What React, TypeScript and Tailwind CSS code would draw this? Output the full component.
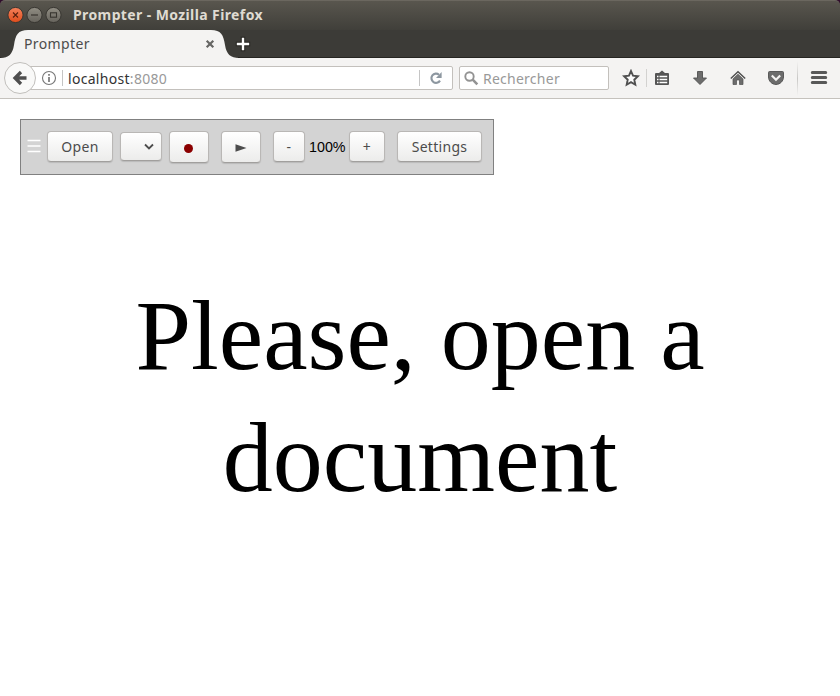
import React from "react";

const ubuntu = "font-['Noto_Sans','Open_Sans',sans-serif]";
const buttonBase =
  "flex shrink-0 items-center justify-center rounded-[4px] border border-[#b9b7b5] border-b-[#a19f9d] bg-linear-to-b from-white to-[#ececeb] text-[14px] leading-[18px] tracking-[0.3px] text-[#4c4c4c] shadow-[0_1px_1px_rgba(0,0,0,0.12)]";

function TitleBar() {
  return (
    <header className="flex h-[30px] items-center rounded-t-[5px] border-t border-[#6b675f] bg-linear-to-b from-[#59564e] to-[#403f3a] pl-[7px]">
      <svg width="56" height="18" viewBox="0 0 56 18" className="mr-[10px] mb-px shrink-0">
        <defs>
          <linearGradient id="closeFill" x1="0" y1="0" x2="0" y2="1">
            <stop offset="0" stopColor="#f5815b" />
            <stop offset="1" stopColor="#df4c1b" />
          </linearGradient>
          <linearGradient id="grayFill" x1="0" y1="0" x2="0" y2="1">
            <stop offset="0" stopColor="#918e84" />
            <stop offset="1" stopColor="#66635c" />
          </linearGradient>
        </defs>
        <circle cx="8.5" cy="9" r="7.6" fill="url(#closeFill)" stroke="#383631" />
        <circle cx="27.5" cy="9" r="7.6" fill="url(#grayFill)" stroke="#383631" />
        <circle cx="46.5" cy="9" r="7.6" fill="url(#grayFill)" stroke="#383631" />
        <path d="M6 6.5l5 5M11 6.5l-5 5" stroke="#58200e" strokeWidth="1.1" />
        <path d="M24 9h7" stroke="#37352f" strokeWidth="1.2" />
        <rect x="43.5" y="6.8" width="6" height="4.4" fill="none" stroke="#37352f" strokeWidth="1.1" />
      </svg>
      <h1 className="mb-[2px] text-[14px] leading-[18px] font-bold tracking-[0.39px] whitespace-nowrap text-[#dfdbd2]">
        Prompter - Mozilla Firefox
      </h1>
    </header>
  );
}

function TabStrip() {
  return (
    <div className="relative flex h-[28px] items-center bg-[#3c3b37]">
      <svg width="240" height="28" viewBox="0 0 240 28" className="absolute top-0 left-0">
        <path d="M0 27.5H840" stroke="#262521" />
        <path
          d="M0 28C9 28 12.500 24 14 15C15.500 5 18 0 28 0H211C221 0 223.500 5 225 15C226.500 24 230 28 240 28Z"
          fill="#f4f3f2"
        />
      </svg>
      <div className="absolute bottom-0 left-[238px] h-px w-[602px] bg-[#262521]" />
      <span className="relative ml-6 w-[181px] text-[14px] leading-[18px] tracking-[0.38px] text-[#4c4c4c]">Prompter</span>
      <svg width="10" height="10" viewBox="0 0 10 10" className="relative shrink-0">
        <path d="M1.700 1.700l6.600 6.600M8.300 1.700l-6.600 6.600" stroke="#666664" strokeWidth="2.200" />
      </svg>
      <svg width="16" height="16" viewBox="0 0 16 16" className="relative ml-5 shrink-0">
        <path d="M8 .8v14.400M.8 8h14.400" stroke="#24231f" strokeWidth="4.400" />
        <path d="M8 1.800v12.400M1.800 8h12.400" stroke="#fff" strokeWidth="2.400" />
      </svg>
    </div>
  );
}

function NavBar() {
  return (
    <nav className="flex h-[41px] items-center border-b border-[#c5c2bd] bg-[#f4f3f2] pl-1">
      <div className="z-10 flex size-8 shrink-0 items-center justify-center rounded-full border border-[#c1bfbc] bg-[#f9f9f8]">
        <svg width="16" height="16" viewBox="0 0 16 16">
          <path d="M9 2L3 8l6 6M3 8h11.500" fill="none" stroke="#4f4f4f" strokeWidth="3.300" />
        </svg>
      </div>
      <div className="-ml-4 flex h-[24px] w-[433px] shrink-0 items-center rounded-r-[2px] border border-[#c3c0bc] bg-white pl-[20px]">
        <svg width="16" height="16" viewBox="0 0 16 16" className="shrink-0">
          <circle cx="8" cy="8" r="6.500" fill="none" stroke="#777" strokeWidth="1.100" />
          <path d="M8 7v5M8 4v1.700" stroke="#777" strokeWidth="1.700" />
        </svg>
        <span className="ml-[5px] h-4 w-px bg-[#c5c5c5]" />
        <span className="mt-px ml-[5px] text-[14px] leading-[18px] tracking-[0.3px] text-[#333]">
          localhost<span className="text-[#999]">:8080</span>
        </span>
        <span className="ml-auto h-4 w-px bg-[#c5c5c5]" />
        <svg width="14" height="14" viewBox="0 0 14 14" className="mr-[9px] ml-[9px] shrink-0">
          <path d="M11 9.600A4.600 4.600 0 1 1 10 3.700" fill="none" stroke="#8d97a0" strokeWidth="2.100" />
          <path d="M12.600 1v6H7z" fill="#8d97a0" />
        </svg>
      </div>
      <div className="ml-[6px] flex h-[24px] w-[150px] shrink-0 items-center rounded-[2px] border border-[#c3c0bc] bg-white pl-1">
        <svg width="15" height="15" viewBox="0 0 15 15">
          <circle cx="5.500" cy="5.500" r="4.200" fill="none" stroke="#939393" strokeWidth="1.900" />
          <path d="M8.700 8.700l4.600 4.600" stroke="#939393" strokeWidth="2.600" />
        </svg>
        <span className="mt-px ml-1 text-[14px] leading-[18px] tracking-[0.25px] text-[#999]">Rechercher</span>
      </div>
      <svg width="18" height="18" viewBox="0 0 18 18" className="ml-[13px] shrink-0">
        <path d="M9 2l2 4.700 5 .500-3.700 3.500 1 5L9 13.200l-4.300 2.500 1-5L2 7.200l5-.500z" fill="#fbfbfb" stroke="#505050" strokeWidth="1.900" />
      </svg>
      <span className="ml-[6px] h-[18px] w-px bg-[#d3d2d0]" />
      <svg width="16" height="16" viewBox="0 0 16 16" className="ml-[7px] shrink-0">
        <path d="M2 3H5L8 .5 11 3H14Q15 3 15 4v10Q15 15 14 15H2Q1 15 1 14V4Q1 3 2 3z" fill="#555" />
        <path d="M3 6.500h1.500M5.500 6.500h7.700M3 9.500h1.500M5.500 9.500h7.700M3 12.500h1.500M5.500 12.500h7.700" stroke="#fff" strokeWidth="1.700" />
      </svg>
      <svg width="16" height="16" viewBox="0 0 16 16" className="ml-[22px] shrink-0">
        <path d="M5.500 1.500h5V8h4L8 14.500 1.500 8h4z" fill="#6c6c6c" stroke="#505050" strokeWidth=".9" />
      </svg>
      <svg width="16" height="16" viewBox="0 0 16 16" className="ml-[22px] shrink-0">
        <path d="M.8 8.500L8 1.800l7.200 6.700" fill="none" stroke="#505050" strokeWidth="1.500" />
        <path d="M8 4.200l5 4.700v5.600H9.500V10h-3v4.500H3V8.900z" fill="#6c6c6c" stroke="#505050" strokeWidth=".7" />
      </svg>
      <svg width="18" height="16" viewBox="0 0 18 16" className="ml-[21px] shrink-0">
        <path d="M2.500 1.500h13q1 0 1 1V7c0 4-3.500 7.500-7.500 7.500S1.500 11 1.500 7V2.500q0-1 1-1z" fill="#6c6c6c" stroke="#505050" strokeWidth=".9" />
        <path d="M4.800 5.500l4.200 4.200 4.200-4.200" fill="none" stroke="#f4f3f2" strokeWidth="2.200" />
      </svg>
      <span className="ml-[12px] h-[35px] w-px bg-linear-to-b from-transparent via-[#c9c8c6] to-transparent" />
      <svg width="18" height="16" viewBox="0 0 18 16" className="ml-[12px] shrink-0">
        <path d="M2.300 2.500h13.400M2.300 7.500h13.400M2.300 12.500h13.400" stroke="#585858" strokeWidth="3" strokeLinecap="round" />
      </svg>
    </nav>
  );
}

function PrompterToolbar() {
  return (
    <div className="flex h-[56px] w-[474px] items-start border border-[#808080] bg-[#d3d3d3] pt-[11px] pl-[6px]">
      <svg width="14" height="14" viewBox="0 0 14 14" className="mt-2 shrink-0">
        <path d="M.5 1.500h13M.5 7h13M.5 12.500h13" stroke="#fff" strokeWidth="1.700" />
      </svg>
      <button className={`${buttonBase} ml-[6px] h-[31px] w-[66px]`}>Open</button>
      <button className={`${buttonBase} mt-px ml-[7px] h-[29px] w-[42px] pl-[15px]`} aria-label="Recent">
        <svg width="10" height="8" viewBox="0 0 10 8">
          <path d="M1 1.500l4 4 4-4" fill="none" stroke="#4c4c4c" strokeWidth="1.800" />
        </svg>
      </button>
      <button className={`${buttonBase} ml-[7px] h-[32px] w-[40px]`} aria-label="Record">
        <span className="mt-[2px] mr-px size-[9px] rounded-full bg-[#8b0000]" />
      </button>
      <button className={`${buttonBase} ml-3 h-[32px] w-[40px]`} aria-label="Play">
        <svg width="12" height="8" viewBox="0 0 12 8" className="mt-[2px] mr-px">
          <path d="M.5.200L11.500 4 .5 7.800z" fill="#4c4c4c" />
        </svg>
      </button>
      <button className={`${buttonBase} ml-3 h-[31px] w-[32px]`}>-</button>
      <span className="mt-[7px] ml-1 w-[40px] font-['Liberation_Sans',Arial,sans-serif] text-[14.300px] leading-[18px] text-black">100%</span>
      <button className={`${buttonBase} h-[31px] w-[36px]`}>+</button>
      <button className={`${buttonBase} ml-3 h-[31px] w-[85px]`}>Settings</button>
    </div>
  );
}

export default function App() {
  return (
    <div className={`h-[696px] w-[840px] overflow-hidden bg-white ${ubuntu}`}>
      <div className="bg-[#2f0d2b]">
        <TitleBar />
      </div>
      <TabStrip />
      <NavBar />
      <main className="px-5 pt-5">
        <PrompterToolbar />
        <p className="mx-auto mt-[100px] w-[600px] text-center font-['Liberation_Serif','Times_New_Roman',serif] text-[100px] leading-[122px] text-black">
          Please, open a document
        </p>
      </main>
    </div>
  );
}
